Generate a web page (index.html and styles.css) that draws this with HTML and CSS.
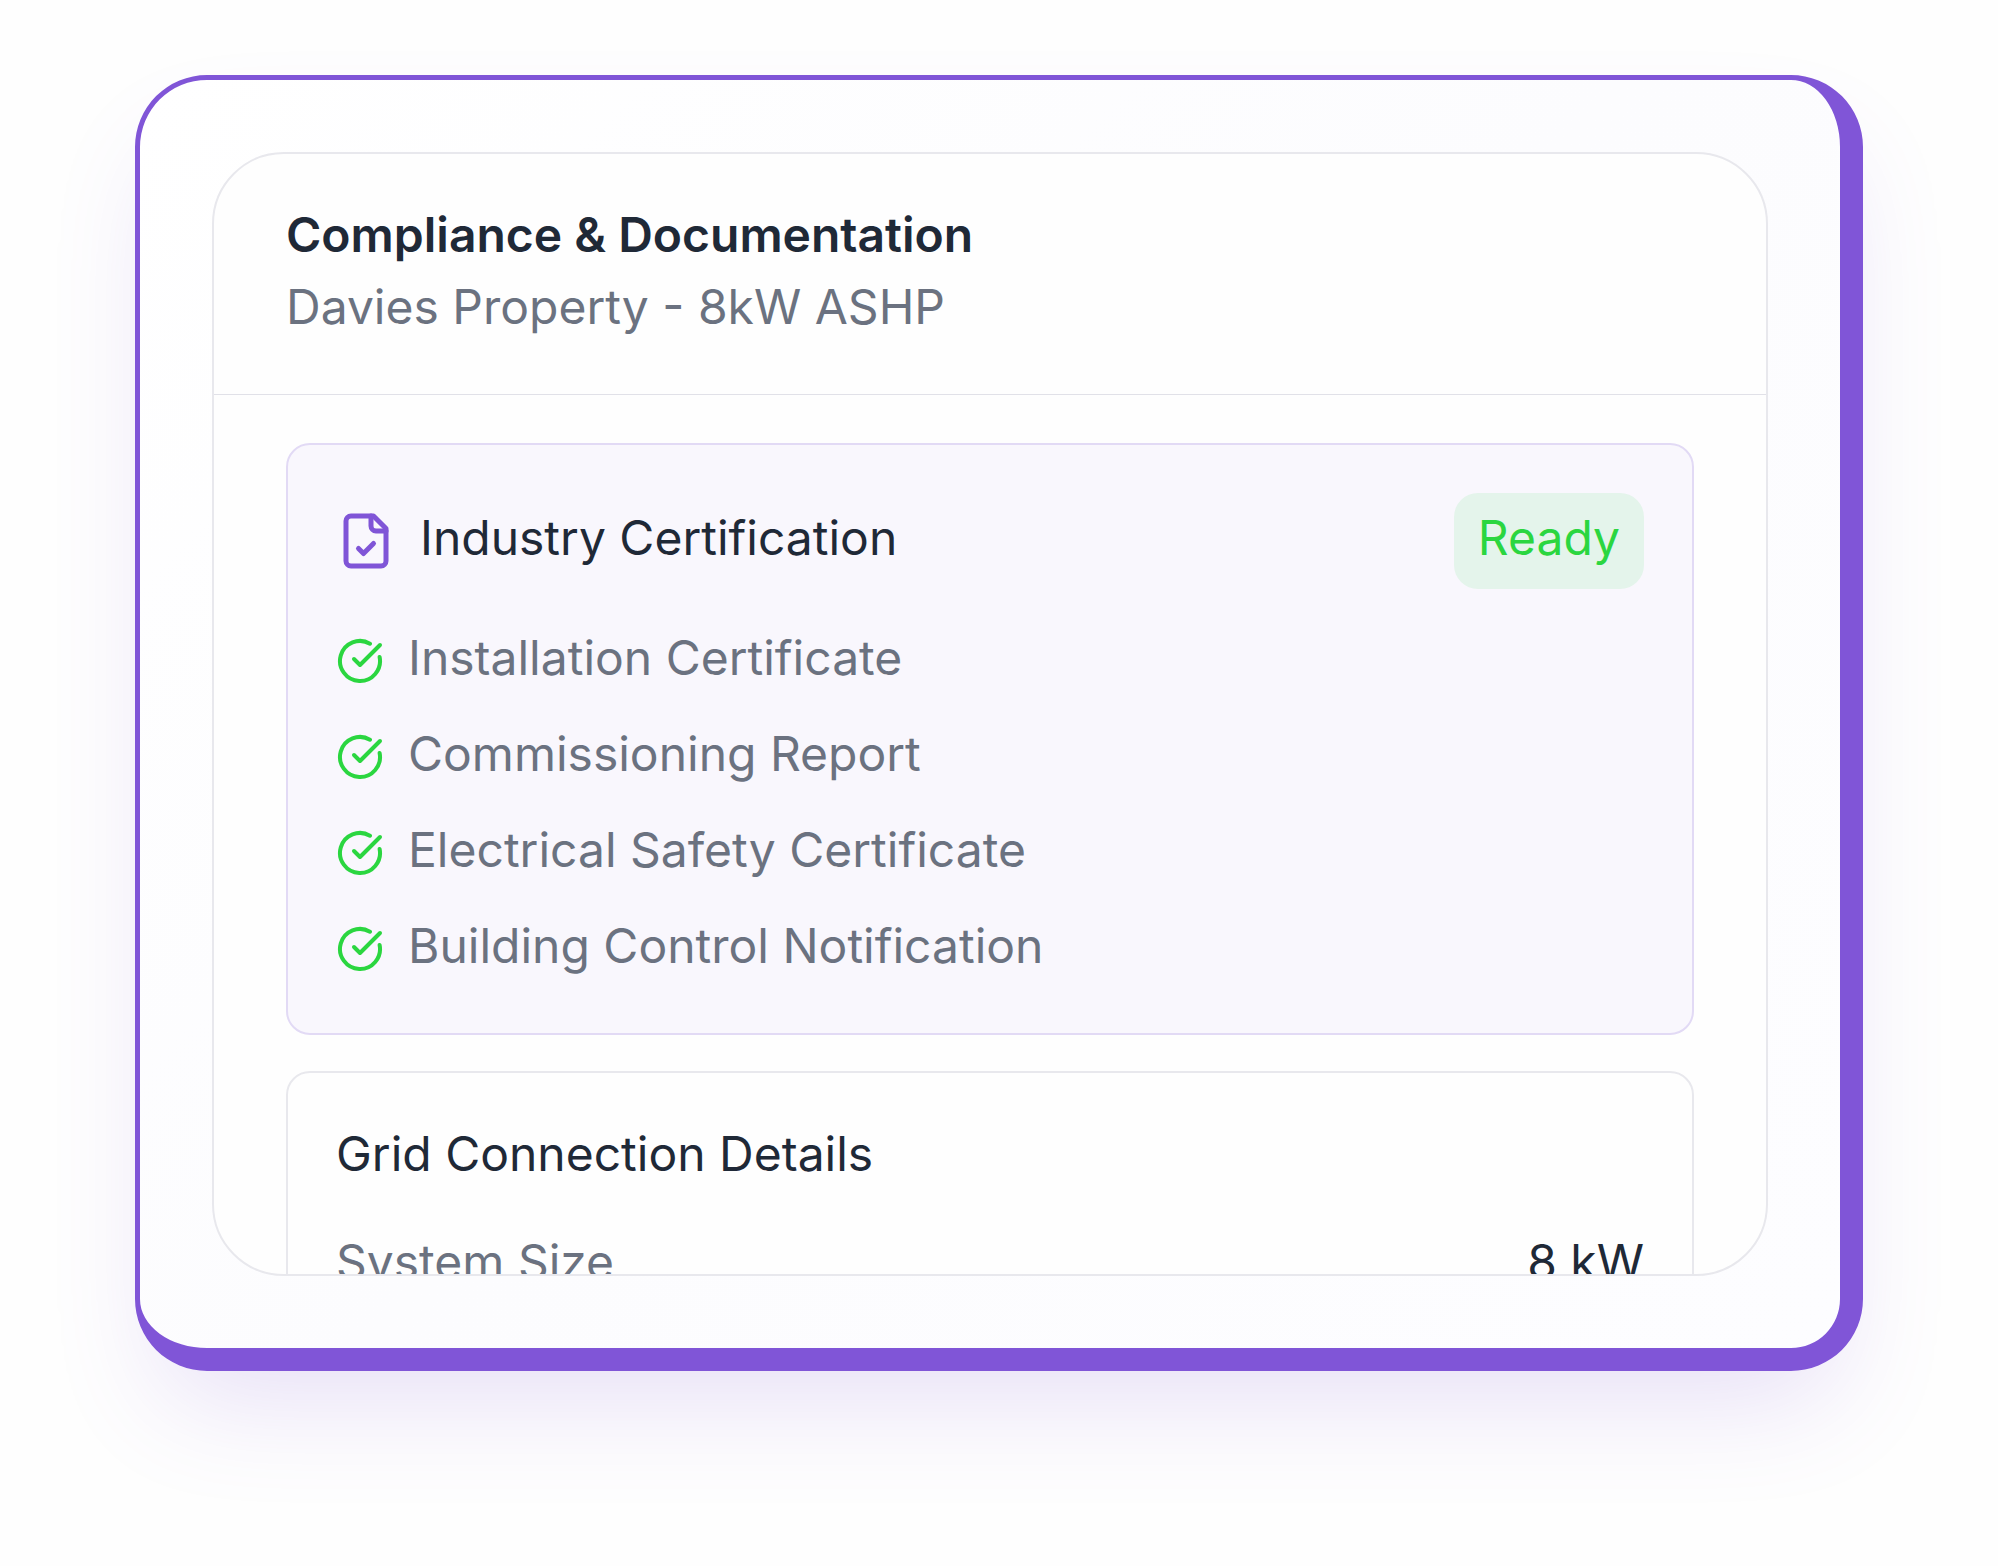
FILE: index.html
```html
<!DOCTYPE html>
<html lang="en">
<head>
    <meta charset="UTF-8">
    <meta name="viewport" content="width=device-width, initial-scale=1.0">
    <title>Compliance &amp; Documentation</title>
    <link rel="stylesheet" href="styles.css">
</head>
<body>
    <svg class="sprite" aria-hidden="true">
        <symbol id="icon-file-check" viewBox="0 0 24 24">
            <path d="M15 2H6a2 2 0 0 0-2 2v16a2 2 0 0 0 2 2h12a2 2 0 0 0 2-2V7Z"/>
            <path d="M14 2v4a2 2 0 0 0 2 2h4"/>
            <path d="m9 15 2 2 4-4"/>
        </symbol>
        <symbol id="icon-circle-check" viewBox="0 0 24 24">
            <path d="M21.801 10A10 10 0 1 1 17 3.335"/>
            <path d="m9 11 3 3L22 4"/>
        </symbol>
    </svg>

    <main class="frame">
        <section class="panel">
            <header class="panel-header">
                <h1>Compliance &amp; Documentation</h1>
                <p class="muted">Davies Property - 8kW ASHP</p>
            </header>

            <div class="panel-body">
                <article class="card card-accent">
                    <div class="card-head">
                        <svg class="icon icon-file" aria-hidden="true"><use href="#icon-file-check"/></svg>
                        <h2>Industry Certification</h2>
                        <div class="badge"><p>Ready</p></div>
                    </div>
                    <ul class="checklist">
                        <li>
                            <svg class="icon icon-check" aria-hidden="true"><use href="#icon-circle-check"/></svg>
                            <p class="muted">Installation Certificate</p>
                        </li>
                        <li>
                            <svg class="icon icon-check" aria-hidden="true"><use href="#icon-circle-check"/></svg>
                            <p class="muted">Commissioning Report</p>
                        </li>
                        <li>
                            <svg class="icon icon-check" aria-hidden="true"><use href="#icon-circle-check"/></svg>
                            <p class="muted">Electrical Safety Certificate</p>
                        </li>
                        <li>
                            <svg class="icon icon-check" aria-hidden="true"><use href="#icon-circle-check"/></svg>
                            <p class="muted">Building Control Notification</p>
                        </li>
                    </ul>
                </article>

                <article class="card">
                    <h2>Grid Connection Details</h2>
                    <dl class="details">
                        <dt class="muted">System Size</dt>
                        <dd>8 kW</dd>
                    </dl>
                </article>
            </div>
        </section>
    </main>
</body>
</html>
```

FILE: styles.css
```css
:root {
    --primary: #8055d7;
    --success: #2bd640;
    --dark: #1f2937;
    --muted: #6b7280;
    --line: #e8e8ed;
}
* {
    box-sizing: border-box;
}
body {
    font-family: Inter, sans-serif;
    font-size: 48px;
    line-height: 66px;
    color: var(--dark);
    background: #fefefe;
    margin: 0;
    padding: 75px 135px 195px;
    height: 100vh;
    display: flex;
}
h1, h2, p, dl, dt, dd, ul {
    margin: 0;
    padding: 0;
}
h1, h2, p, dt, dd {
    font-size: 48px;
    font-weight: 400;
    padding-bottom: 6px;
}
h1 {
    font-weight: 600;
}
.sprite {
    position: absolute;
    width: 0;
    height: 0;
}
.frame {
    flex: 1;
    display: flex;
    min-width: 0;
    padding: 72px;
    background: linear-gradient(135deg, #ffffff, #fcfcfe 50%, #fdfdff);
    border: 5px solid var(--primary);
    border-right-width: 23px;
    border-bottom-width: 23px;
    border-radius: 72px;
    box-shadow: 0 54px 110px -28px rgba(128, 85, 215, 0.19);
}
.panel {
    flex: 1;
    min-width: 0;
    background: #fefefe;
    border: 2px solid var(--line);
    border-radius: 72px;
    overflow: hidden;
}
.panel-header {
    padding: 48px 72px;
    border-bottom: 1px solid #e1e1e8;
}
.panel-body {
    display: flex;
    flex-direction: column;
    gap: 36px;
    padding: 48px 72px;
}
.muted {
    color: var(--muted);
}
.card {
    display: flex;
    flex-direction: column;
    gap: 36px;
    padding: 48px;
    border: 2px solid var(--line);
    border-radius: 24px;
}
.card-accent {
    background: #f9f7fd;
    border-color: #e2daf5;
}
.card-head {
    display: flex;
    align-items: center;
    gap: 24px;
}
.badge {
    margin-left: auto;
    padding: 12px 24px;
    color: var(--success);
    background: #e4f4eb;
    border-radius: 24px;
}
.icon {
    flex: none;
    fill: none;
    stroke: currentColor;
    stroke-width: 2;
    stroke-linecap: round;
    stroke-linejoin: round;
}
.icon-file {
    width: 60px;
    height: 60px;
    color: var(--primary);
}
.icon-check {
    width: 48px;
    height: 48px;
    color: var(--success);
}
.checklist {
    display: flex;
    flex-direction: column;
    gap: 24px;
    list-style: none;
}
.checklist li {
    display: flex;
    align-items: center;
    gap: 24px;
}
.details {
    display: flex;
    justify-content: space-between;
}
```
